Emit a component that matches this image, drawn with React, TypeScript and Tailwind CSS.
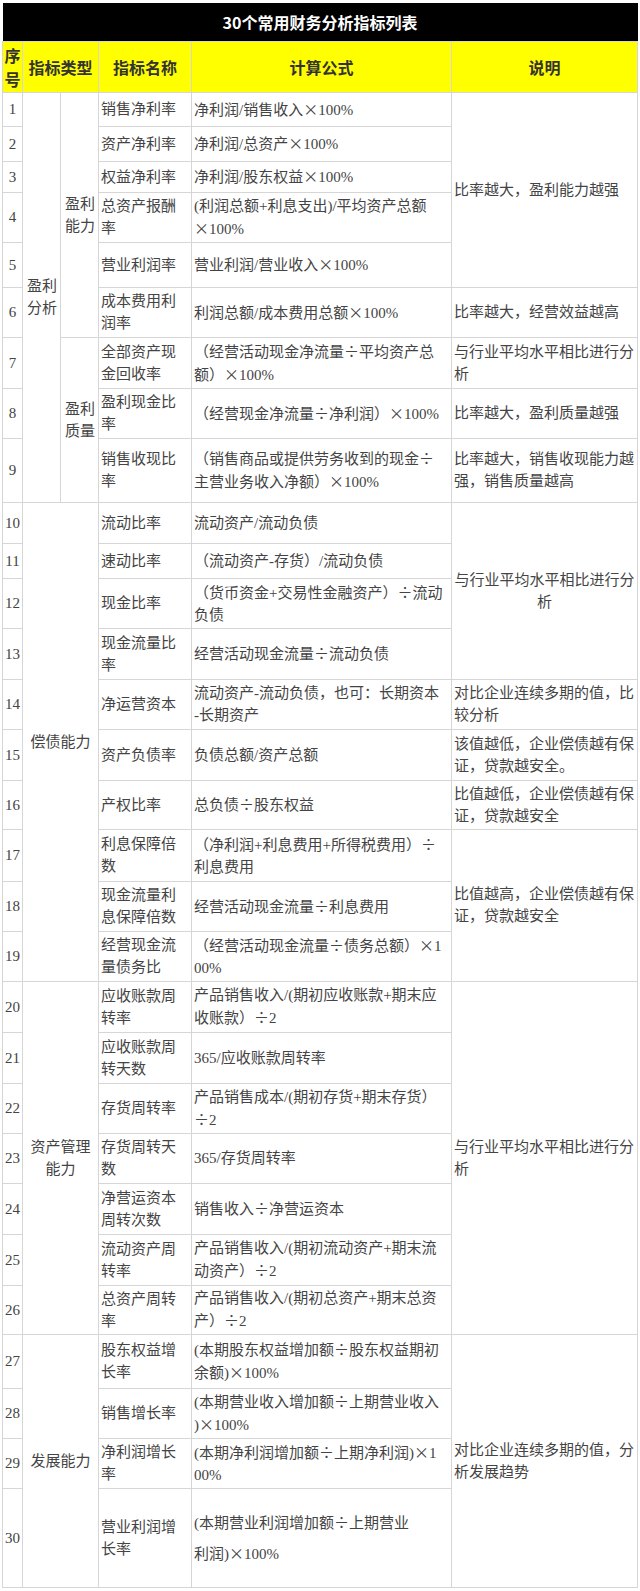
import React from "react";

type Span = { text: string; span: number; center?: boolean };

type Row = {
  h: string;
  name: string;
  formula: string;
  fClass?: string;
  outer?: Span;
  inner?: Span;
  group?: Span;
  desc?: Span;
};

const rows: Row[] = [
  { h: "h-[34px]", name: "销售净利率", formula: "净利润/销售收入×100%", outer: { text: "盈利\n分析", span: 9 }, inner: { text: "盈利\n能力", span: 6 }, desc: { text: "比率越大，盈利能力越强", span: 5 } },
  { h: "h-[35px]", name: "资产净利率", formula: "净利润/总资产×100%" },
  { h: "h-[31px]", name: "权益净利率", formula: "净利润/股东权益×100%" },
  { h: "h-[50px]", name: "总资产报酬\n率", formula: "(利润总额+利息支出)/平均资产总额\n×100%" },
  { h: "h-[45px]", name: "营业利润率", formula: "营业利润/营业收入×100%" },
  { h: "h-[50px]", name: "成本费用利\n润率", formula: "利润总额/成本费用总额×100%", desc: { text: "比率越大，经营效益越高", span: 1 } },
  { h: "h-[51px]", name: "全部资产现\n金回收率", formula: "（经营活动现金净流量÷平均资产总\n额）×100%", inner: { text: "盈利\n质量", span: 3 }, desc: { text: "与行业平均水平相比进行分\n析", span: 1 } },
  { h: "h-[50px]", name: "盈利现金比\n率", formula: "（经营现金净流量÷净利润）×100%", desc: { text: "比率越大，盈利质量越强", span: 1 } },
  { h: "h-[64px]", name: "销售收现比\n率", formula: "（销售商品或提供劳务收到的现金÷\n主营业务收入净额）×100%", desc: { text: "比率越大，销售收现能力越\n强，销售质量越高", span: 1 } },
  { h: "h-[41px]", name: "流动比率", formula: "流动资产/流动负债", group: { text: "偿债能力", span: 10 }, desc: { text: "与行业平均水平相比进行分\n析", span: 4, center: true } },
  { h: "h-[35px]", name: "速动比率", formula: "（流动资产-存货）/流动负债" },
  { h: "h-[50px]", name: "现金比率", formula: "（货币资金+交易性金融资产）÷流动\n负债" },
  { h: "h-[51px]", name: "现金流量比\n率", formula: "经营活动现金流量÷流动负债" },
  { h: "h-[50px]", name: "净运营资本", formula: "流动资产-流动负债，也可：长期资本\n-长期资产", desc: { text: "对比企业连续多期的值，比\n较分析", span: 1 } },
  { h: "h-[51px]", name: "资产负债率", formula: "负债总额/资产总额", desc: { text: "该值越低，企业偿债越有保\n证，贷款越安全。", span: 1 } },
  { h: "h-[49px]", name: "产权比率", formula: "总负债÷股东权益", desc: { text: "比值越低，企业偿债越有保\n证，贷款越安全", span: 1 } },
  { h: "h-[52px]", name: "利息保障倍\n数", formula: "（净利润+利息费用+所得税费用）÷\n利息费用", desc: { text: "比值越高，企业偿债越有保\n证，贷款越安全", span: 3 } },
  { h: "h-[50px]", name: "现金流量利\n息保障倍数", formula: "经营活动现金流量÷利息费用" },
  { h: "h-[50px]", name: "经营现金流\n量债务比", formula: "（经营活动现金流量÷债务总额）×1\n00%" },
  { h: "h-[51px]", name: "应收账款周\n转率", formula: "产品销售收入/(期初应收账款+期末应\n收账款）÷2", group: { text: "资产管理\n能力", span: 7 }, desc: { text: "与行业平均水平相比进行分\n析", span: 7 } },
  { h: "h-[51px]", name: "应收账款周\n转天数", formula: "365/应收账款周转率" },
  { h: "h-[50px]", name: "存货周转率", formula: "产品销售成本/(期初存货+期末存货）\n÷2" },
  { h: "h-[50px]", name: "存货周转天\n数", formula: "365/存货周转率" },
  { h: "h-[51px]", name: "净营运资本\n周转次数", formula: "销售收入÷净营运资本" },
  { h: "h-[51px]", name: "流动资产周\n转率", formula: "产品销售收入/(期初流动资产+期末流\n动资产）÷2" },
  { h: "h-[49px]", name: "总资产周转\n率", formula: "产品销售收入/(期初总资产+期末总资\n产）÷2" },
  { h: "h-[54px]", name: "股东权益增\n长率", formula: "(本期股东权益增加额÷股东权益期初\n余额)×100%", group: { text: "发展能力", span: 4 }, desc: { text: "对比企业连续多期的值，分\n析发展趋势", span: 4 } },
  { h: "h-[50px]", name: "销售增长率", formula: "(本期营业收入增加额÷上期营业收入\n)×100%" },
  { h: "h-[50px]", name: "净利润增长\n率", formula: "(本期净利润增加额÷上期净利润)×1\n00%" },
  { h: "h-[99px]", name: "营业利润增\n长率", formula: "(本期营业利润增加额÷上期营业\n利润)×100%", fClass: "leading-[30px]" },
];

// × and ÷ are full width in the source table
function Formula({ text }: { text: string }) {
  return (
    <>
      {text.split("\n").map((line, li) => (
        <div key={li}>
          {line.split(/([×÷])/).map((p, i) =>
            p === "×" || p === "÷" ? (
              <span key={i} className="inline-block w-[15px] text-center font-['Noto_Sans_CJK_SC',sans-serif]">
                {p}
              </span>
            ) : (
              <span key={i}>{p}</span>
            )
          )}
        </div>
      ))}
    </>
  );
}

function Lines({ text }: { text: string }) {
  return (
    <>
      {text.split("\n").map((l, i) => (
        <div key={i}>{l}</div>
      ))}
    </>
  );
}

const cell = "border border-[#d6d6d6] px-[2px] align-middle whitespace-pre";
const head = "border border-[#d6d6d6] bg-[#ffff00] text-[16px] font-bold text-[#333] font-['Noto_Sans_CJK_SC',sans-serif] leading-[24px] align-middle";

export default function App() {
  return (
    <div className="bg-white w-[640px] h-[1591px] pt-[3px] pl-[2px]">
      <table className="table-fixed border-collapse w-[635px] text-[15px] leading-[22px] text-[#444] font-['Liberation_Serif','Noto_Sans_CJK_SC',serif]">
        <colgroup>
          <col className="w-[20px]" />
          <col className="w-[38px]" />
          <col className="w-[38px]" />
          <col className="w-[93px]" />
          <col className="w-[260px]" />
          <col className="w-[186px]" />
        </colgroup>
        <thead>
          <tr className="h-[38px]">
            <th
              colSpan={6}
              className="bg-black text-white text-[16px] font-bold font-['Noto_Sans_CJK_SC',sans-serif] text-center align-middle"
            >
              30个常用财务分析指标列表
            </th>
          </tr>
          <tr className="h-[51px]">
            <th className={`${head} px-0`}>
              <div>序</div>
              <div>号</div>
            </th>
            <th colSpan={2} className={head}>
              指标类型
            </th>
            <th className={head}>指标名称</th>
            <th className={head}>计算公式</th>
            <th className={head}>说明</th>
          </tr>
        </thead>
        <tbody>
          {rows.map((r, i) => (
            <tr key={i} className={r.h}>
              <td className={`${cell} px-0 text-center`}>{i + 1}</td>
              {r.outer && (
                <td rowSpan={r.outer.span} className={`${cell} px-[4px]`}>
                  <Lines text={r.outer.text} />
                </td>
              )}
              {r.inner && (
                <td rowSpan={r.inner.span} className={`${cell} px-[4px]`}>
                  <Lines text={r.inner.text} />
                </td>
              )}
              {r.group && (
                <td rowSpan={r.group.span} colSpan={2} className={`${cell} text-center`}>
                  <Lines text={r.group.text} />
                </td>
              )}
              <td className={cell}>
                <Lines text={r.name} />
              </td>
              <td className={`${cell} ${r.fClass ?? ""}`}>
                <Formula text={r.formula} />
              </td>
              {r.desc && (
                <td
                  rowSpan={r.desc.span}
                  className={`${cell} ${r.desc.center ? "text-center" : ""}`}
                >
                  <Lines text={r.desc.text} />
                </td>
              )}
            </tr>
          ))}
        </tbody>
      </table>
    </div>
  );
}
